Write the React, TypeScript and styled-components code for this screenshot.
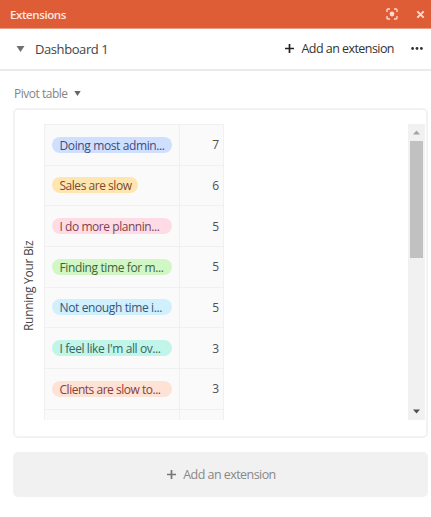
import React from 'react';
import styled, {createGlobalStyle} from 'styled-components';

const GlobalStyle = createGlobalStyle`
    * {
        box-sizing: border-box;
    }
    body {
        margin: 0;
        background: #fff;
        font-family: "Open Sans", "Noto Sans", sans-serif;
        overflow: hidden;
    }
`

const Panel = styled.div`
    width: 431px;
    height: 517px;
    display: flex;
    flex-direction: column;
    background: #fff;
`

const TitleBar = styled.header`
    height: 29px;
    flex: none;
    display: flex;
    align-items: center;
    padding: 1px 6px 0 10px;
    background: #de5c36;
    border-bottom: 1px solid #eb9d86;
    color: #fde9e2;
`

const Title = styled.span`
    flex: 1;
    font-size: 11.5px;
    font-weight: 600;
    letter-spacing: -0.4px;
`

const TitleIcon = styled.svg`
    display: block;
    margin: 0 0 1px 18px;
`

const DashboardBar = styled.div`
    height: 42px;
    flex: none;
    display: flex;
    align-items: center;
    padding: 0 8px 1px 16px;
    border-bottom: 2px solid #ebebeb;
`

const Caret = styled.svg`
    display: block;
    flex: none;
`

const DashboardName = styled.span`
    flex: 1;
    margin-left: 10px;
    font-size: 13px;
    letter-spacing: -0.42px;
    color: #444;
`

const AddLabel = styled.span<{ $color: string }>`
    margin-left: 7px;
    font-size: 12.5px;
    letter-spacing: -0.55px;
    color: ${p => p.$color};
`

const Dots = styled.svg`
    display: block;
    margin-left: 17px;
`

const Content = styled.main`
    display: flex;
    flex-direction: column;
    padding: 14px 3px 0 13px;
`

const ExtensionName = styled.div`
    height: 16px;
    padding-left: 1px;
    display: flex;
    align-items: center;
    gap: 6px;
    font-size: 12px;
    letter-spacing: -0.48px;
    color: #858585;
`

const Card = styled.section`
    height: 330px;
    margin-top: 7px;
    padding: 14px 1px 0 0;
    display: flex;
    align-items: flex-start;
    border: 2px solid #f2f2f2;
    border-radius: 5px;
`

const AxisLabel = styled.div`
    width: 29px;
    height: 296px;
    padding: 0 0 28px 3px;
    display: flex;
    align-items: center;
    justify-content: center;
    writing-mode: vertical-rl;
    transform: rotate(180deg);
    font-size: 12px;
    letter-spacing: -0.3px;
    white-space: nowrap;
    color: #444;
`

const Rows = styled.div`
    width: 180px;
    height: 296px;
    overflow: hidden;
    border: 1px solid #f0f0f0;
    border-bottom: 0;
    background: #fafafa;
`

const Row = styled.div`
    height: 40.67px;
    display: flex;
    border-bottom: 1px solid #f0f0f0;
`

const LabelCell = styled.div`
    width: 135px;
    display: flex;
    align-items: center;
    padding: 0 7px;
    border-right: 1px solid #f0f0f0;
`

const Tag = styled.span<{ $bg: string, $color: string, $spacing: number }>`
    height: 16px;
    max-width: 120px;
    padding: 0 7px 0 7.5px;
    border-radius: 8px;
    line-height: 17px;
    font-size: 12px;
    white-space: nowrap;
    letter-spacing: ${p => p.$spacing}px;
    background: ${p => p.$bg};
    color: ${p => p.$color};
`

const WideTag = styled(Tag)`
    width: 120px;
`

const CountCell = styled.div`
    flex: 1;
    display: flex;
    align-items: center;
    justify-content: flex-end;
    padding-right: 4px;
    font-size: 12px;
    color: #505050;
`

const Scrollbar = styled.div`
    width: 17px;
    height: 296px;
    margin-left: auto;
    display: flex;
    flex-direction: column;
    align-items: center;
    padding: 6px 0;
    background: #f1f1f1;
`

const Thumb = styled.div`
    width: 13px;
    height: 117px;
    margin: 6px 0 auto;
    background: #c1c1c1;
`

const AddButton = styled.button`
    height: 45px;
    margin-top: 14px;
    padding: 0 0 0 2px;
    display: flex;
    align-items: center;
    justify-content: center;
    border: 0;
    border-radius: 5px;
    background: #f1f1f1;
    font-family: inherit;
`

const Plus = ({color}: { color: string }) => (
    <svg width="9" height="9" viewBox="0 0 9 9">
        <path d="M4.5 0V9M0 4.5H9" stroke={color} strokeWidth="1.7"/>
    </svg>
)

interface PivotRow {
    label: string;
    count: number;
    bg: string;
    color: string;
    full: boolean;
    spacing: number;
}

const rows: PivotRow[] = [
    {label: 'Doing most admin...', count: 7, bg: '#cfdfff', color: '#414b80', full: true, spacing: -0.38},
    {label: 'Sales are slow', count: 6, bg: '#ffe6b0', color: '#7a4a32', full: false, spacing: -0.47},
    {label: 'I do more plannin...', count: 5, bg: '#ffdce5', color: '#7d4350', full: true, spacing: -0.45},
    {label: 'Finding time for m...', count: 5, bg: '#d1f7c4', color: '#3e643a', full: true, spacing: -0.38},
    {label: 'Not enough time i...', count: 5, bg: '#d0f0fd', color: '#38557c', full: true, spacing: -0.38},
    {label: "I feel like I'm all ov...", count: 3, bg: '#c2f5e9', color: '#37665e', full: true, spacing: -0.4},
    {label: 'Clients are slow to...', count: 3, bg: '#fee2d5', color: '#85403a', full: true, spacing: -0.48},
]

const App = () => (
    <Panel>
        <GlobalStyle/>
        <TitleBar>
            <Title>Extensions</Title>
            <TitleIcon width="12" height="12" viewBox="0 0 12 12" fill="none" stroke="#fbd9cd" strokeWidth="1.4">
                <path d="M1 4V2Q1 1 2 1H4M8 1H10Q11 1 11 2V4M11 8V10Q11 11 10 11H8M4 11H2Q1 11 1 10V8"/>
                <circle cx="6" cy="6" r="2.4" fill="#fbd9cd" stroke="none"/>
            </TitleIcon>
            <TitleIcon width="9" height="9" viewBox="0 0 9 9" stroke="#fbe1d8" strokeWidth="1.9">
                <path d="M1.3 1.3L7.7 7.7M7.7 1.3L1.3 7.7"/>
            </TitleIcon>
        </TitleBar>
        <DashboardBar>
            <Caret width="9" height="6" viewBox="0 0 9 6"><path d="M0.5 0H8.5L4.5 6Z" fill="#707070"/></Caret>
            <DashboardName>Dashboard 1</DashboardName>
            <Plus color="#222"/>
            <AddLabel $color="#333">Add an extension</AddLabel>
            <Dots width="12" height="3" viewBox="0 0 12 3" fill="#333">
                <circle cx="1.6" cy="1.5" r="1.4"/>
                <circle cx="6" cy="1.5" r="1.4"/>
                <circle cx="10.4" cy="1.5" r="1.4"/>
            </Dots>
        </DashboardBar>
        <Content>
            <ExtensionName>
                Pivot table
                <Caret width="7" height="5" viewBox="0 0 7 5"><path d="M0.3 0H6.7L3.5 5Z" fill="#666"/></Caret>
            </ExtensionName>
            <Card>
                <AxisLabel>Running Your Biz</AxisLabel>
                <Rows>
                    {rows.map(row => {
                        const Label = row.full ? WideTag : Tag;
                        return (
                            <Row key={row.label}>
                                <LabelCell>
                                    <Label $bg={row.bg} $color={row.color} $spacing={row.spacing}>{row.label}</Label>
                                </LabelCell>
                                <CountCell>{row.count}</CountCell>
                            </Row>
                        )
                    })}
                    <Row>
                        <LabelCell/>
                        <CountCell/>
                    </Row>
                </Rows>
                <Scrollbar>
                    <svg width="7" height="5" viewBox="0 0 7 5"><path d="M0 4.5H7L3.5 0.5Z" fill="#a3a3a3"/></svg>
                    <Thumb/>
                    <svg width="7" height="5" viewBox="0 0 7 5"><path d="M0 0.5H7L3.5 4.5Z" fill="#505050"/></svg>
                </Scrollbar>
            </Card>
            <AddButton>
                <Plus color="#777"/>
                <AddLabel $color="#888">Add an extension</AddLabel>
            </AddButton>
        </Content>
    </Panel>
)

export default App;
